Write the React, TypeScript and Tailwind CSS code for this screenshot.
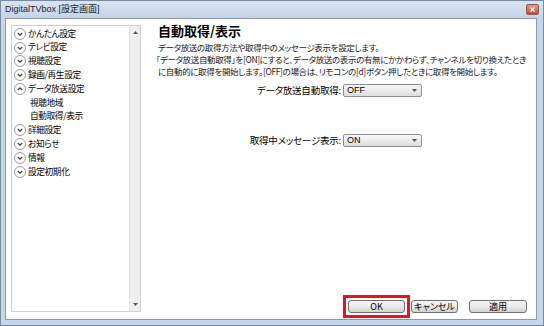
import { ReactNode } from 'react';

const jp = "font-['Noto_Sans_CJK_JP',sans-serif] [font-feature-settings:'palt']";

const Chevron = ({ up = false }: { up?: boolean }) => (
  <svg width="12" height="12" viewBox="0 0 12 12" className="shrink-0">
    <circle cx="6" cy="6" r="5.5" fill="#fdfdfd" stroke="#9c9c9c" />
    <path
      d={up ? 'M3.8 7 L6 4.8 L8.2 7' : 'M3.8 5 L6 7.2 L8.2 5'}
      fill="none"
      stroke="#3d3d3d"
      strokeWidth="1.2"
    />
  </svg>
);

const Arrow = ({ up = false }: { up?: boolean }) => (
  <svg width="5" height="3" viewBox="0 0 5 3">
    <path d={up ? 'M0 3 L2.5 0 L5 3 Z' : 'M0 0 L5 0 L2.5 3 Z'} fill="#555" />
  </svg>
);

const Select = ({ value }: { value: string }) => (
  <div className="w-[79px] h-[13px] shrink-0 flex items-center justify-between pl-[3px] pr-[4px] border border-[#8e8f8f] rounded-[2px] bg-gradient-to-b from-[#f7f7f7] to-[#dedede]">
    <span className="text-[9px] leading-none font-['Liberation_Sans',sans-serif] text-black">{value}</span>
    <Arrow />
  </div>
);

const Btn = ({ children, w }: { children: ReactNode; w: string }) => (
  <div className={`${w} h-[13px] flex items-center justify-center border border-[#707070] rounded-[3px] bg-gradient-to-b from-[#f4f4f4] via-[#ebebeb] to-[#d2d2d2] text-[9px] leading-none text-black ${jp}`}>
    {children}
  </div>
);

const App = () => {
  const tree: { label: string; kind: 'down' | 'up' | 'sub' }[] = [
    { label: 'かんたん設定', kind: 'down' },
    { label: 'テレビ設定', kind: 'down' },
    { label: '視聴設定', kind: 'down' },
    { label: '録画/再生設定', kind: 'down' },
    { label: 'データ放送設定', kind: 'up' },
    { label: '視聴地域', kind: 'sub' },
    { label: '自動取得/表示', kind: 'sub' },
    { label: '詳細設定', kind: 'down' },
    { label: 'お知らせ', kind: 'down' },
    { label: '情報', kind: 'down' },
    { label: '設定初期化', kind: 'down' },
  ];

  return (
    <div className="w-[544px] h-[326px] flex flex-col bg-[#c5d5ea] border border-[#7a8a9e]">
      {/* title bar */}
      <div className="h-[17px] flex items-center justify-between pl-[4px] pr-[4px] bg-gradient-to-b from-[#d9e4f2] to-[#c4d4e9]">
        <span className="text-[9px] leading-none text-[#1e1e1e] font-['Liberation_Sans','Noto_Sans_CJK_JP',sans-serif] [font-feature-settings:'palt']">
          DigitalTVbox [設定画面]
        </span>
        <div className="w-[13px] h-[11px] flex items-center justify-center rounded-[2px] border border-[#8d5a4c] bg-gradient-to-b from-[#e89a82] to-[#c4472c]">
          <svg width="5" height="5" viewBox="0 0 5 5">
            <path d="M0.5 0.5 L4.5 4.5 M4.5 0.5 L0.5 4.5" stroke="#fff" strokeWidth="1.3" />
          </svg>
        </div>
      </div>

      {/* client area */}
      <div className="flex-1 ml-[4px] mr-[6px] mb-[5px] border border-[#8c9aab] bg-white flex">
        {/* tree list */}
        <div className="mt-[6px] ml-[5px] w-[130px] h-[287px] shrink-0 border border-[#cfcfcf] flex">
          <div className={`flex-1 pt-[1px] pl-[2px] ${jp}`}>
            {tree.map((t, i) => (
              <div key={i} className="h-[13.8px] flex items-center gap-[2px]">
                {t.kind === 'sub' ? (
                  <span className="pl-[16px] text-[8.7px] tracking-[-0.4px] leading-none text-black">{t.label}</span>
                ) : (
                  <>
                    <Chevron up={t.kind === 'up'} />
                    <span className="text-[8.7px] tracking-[-0.4px] leading-none text-black">{t.label}</span>
                  </>
                )}
              </div>
            ))}
          </div>
          <div className="w-[11px] flex flex-col items-center justify-between py-[5px] bg-[#efefef] border-l border-[#e4e4e4]">
            <Arrow up />
            <Arrow />
          </div>
        </div>

        {/* content */}
        <div className="flex-1 min-w-0 ml-[17px] flex flex-col">
          <h1 className={`pt-[4px] text-[13px] leading-[16px] font-bold text-black ${jp}`}>自動取得/表示</h1>
          <div className={`mt-[2px] text-[8.5px] tracking-[-0.35px] leading-[12px] text-[#1a1a1a] ${jp}`}>
            <p>データ放送の取得方法や取得中のメッセージ表示を設定します。</p>
            <p className="-ml-[2px] whitespace-nowrap">「データ放送自動取得」を[ON]にすると、データ放送の表示の有無にかかわらず、チャンネルを切り換えたとき</p>
            <p className="whitespace-nowrap">に自動的に取得を開始します。[OFF]の場合は、リモコンの[d]ボタン押したときに取得を開始します。</p>
          </div>

          <div className="mt-[7px] flex items-center gap-[2px]">
            <span className={`w-[183px] text-right text-[9.5px] tracking-[-0.2px] leading-none text-black ${jp}`}>データ放送自動取得:</span>
            <Select value="OFF" />
          </div>
          <div className="mt-[37px] flex items-center gap-[2px]">
            <span className={`w-[183px] text-right text-[9.5px] tracking-[-0.2px] leading-none text-black ${jp}`}>取得中メッセージ表示:</span>
            <Select value="ON" />
          </div>

          <div className="flex-1" />

          <div className="mb-[1px] mr-[9px] flex items-center justify-end">
            <div className="w-[67px] h-[23px] border-[3px] border-[#e8141c] flex items-center justify-center">
              <Btn w="w-[57px]">OK</Btn>
            </div>
            <div className="ml-[1px]">
              <Btn w="w-[47px]">キャンセル</Btn>
            </div>
            <div className="ml-[11px]">
              <Btn w="w-[58px]">適用</Btn>
            </div>
          </div>
        </div>
      </div>
    </div>
  );
};

export default App;
